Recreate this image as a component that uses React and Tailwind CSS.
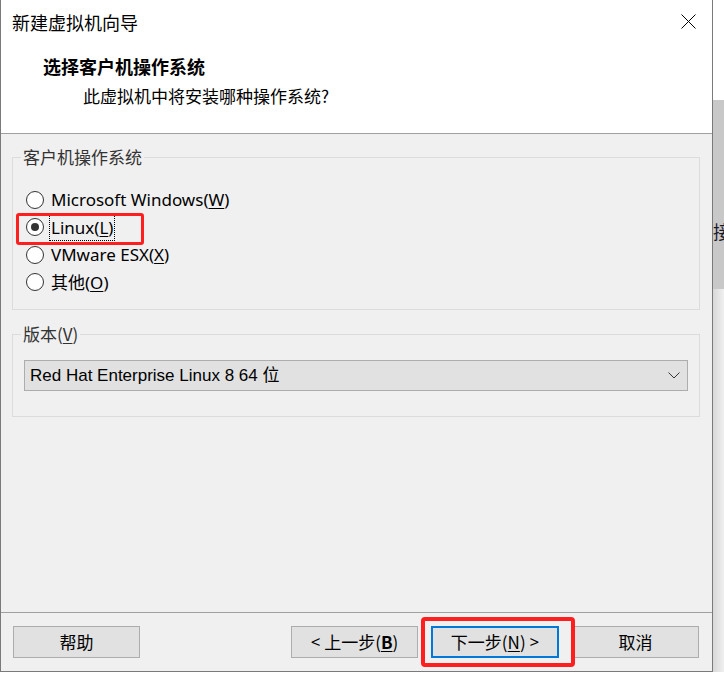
import React from 'react'

const cjk = '"Noto Sans CJK SC", sans-serif'
const latin = '"Noto Sans", "Noto Sans CJK SC", sans-serif'

function Radio({ label, mnemonic, rest = ')', checked, focused }) {
  const text = (
    <span className="leading-[20px]">
      {label}(<span className="underline underline-offset-2">{mnemonic}</span>{rest}
    </span>
  )
  return (
    <div className="flex items-center h-[27.5px] pl-[13px]">
      <span className="w-[18px] h-[18px] rounded-full border border-[#333] bg-white flex items-center justify-center shrink-0">
        {checked && <span className="w-[8px] h-[8px] rounded-full bg-[#333]" />}
      </span>
      <span
        className={
          'ml-[6px] text-[17px] text-black px-[1px] ' +
          (focused ? 'outline outline-1 outline-dotted outline-black' : '')
        }
        style={{ fontFamily: latin }}
      >
        {text}
      </span>
    </div>
  )
}

function Button({ children, primary }) {
  return (
    <div
      className={
        'h-[32px] flex items-center justify-center text-[17px] text-black bg-[#e1e1e1] ' +
        (primary ? 'w-[128px] border-2 border-[#0078d7]' : 'w-[127px] border border-[#adadad]')
      }
      style={{ fontFamily: cjk }}
    >
      {children}
    </div>
  )
}

export default function App() {
  return (
    <div className="flex w-[724px] h-[673px] bg-white overflow-hidden">
      {/* dialog */}
      <div className="relative w-[713px] h-[672px] shrink-0 flex flex-col bg-[#f0f0f0] border-l border-r border-b border-[#7a7a7a]">
        <div className="h-[134px] bg-white border-b border-[#a0a0a0] flex flex-col shrink-0">
          <div className="h-[44px] flex items-center justify-between pl-[11px] pr-[16px]">
            <span className="text-[18px] text-black" style={{ fontFamily: cjk }}>新建虚拟机向导</span>
            <svg width="15" height="15" viewBox="0 0 15 15" className="mt-[-1px]">
              <path d="M0.5 0.5 L14.5 14.5 M14.5 0.5 L0.5 14.5" stroke="#000" strokeWidth="1" fill="none" />
            </svg>
          </div>
          <div className="pl-[42px] pt-[10px] text-[18px] font-bold text-black leading-[24px]" style={{ fontFamily: cjk }}>
            选择客户机操作系统
          </div>
          <div className="pl-[82px] pt-[6px] text-[17px] text-black leading-[24px]" style={{ fontFamily: cjk }}>
            此虚拟机中将安装哪种操作系统?
          </div>
        </div>

        <div className="flex-1 flex flex-col pl-[11px] pr-[12px] pt-[11px]">
          <fieldset className="border border-[#dcdcdc] h-[165px]">
            <legend className="ml-[8px] px-[2px] text-[17px] text-[#333] leading-[24px]" style={{ fontFamily: cjk }}>
              客户机操作系统
            </legend>
            <div className="pt-[17px] flex flex-col">
              <Radio label="Microsoft Windows" mnemonic="W" />
              <Radio label="Linux" mnemonic="L" checked focused />
              <Radio label="VMware ESX" mnemonic="X" />
              <Radio label={<span style={{ fontFamily: cjk }}>其他</span>} mnemonic="O" />
            </div>
          </fieldset>

          <fieldset className="mt-[12px] border border-[#dcdcdc] h-[95px]">
            <legend className="ml-[8px] px-[2px] text-[17px] text-[#333] leading-[24px]" style={{ fontFamily: cjk }}>
              版本(<span className="underline underline-offset-2">V</span>)
            </legend>
            <div className="px-[11px] pt-[14px]">
              <div className="h-[31px] bg-[#e1e1e1] border border-[#adadad] flex items-center justify-between pl-[5px] pr-[7px]">
                <span className="text-[17px] text-black" style={{ fontFamily: '"Liberation Sans", "Noto Sans CJK SC", sans-serif' }}>
                  Red Hat Enterprise Linux 8 64 位
                </span>
                <svg width="12" height="7" viewBox="0 0 12 7">
                  <path d="M0.5 0.5 L6 6 L11.5 0.5" stroke="#333" strokeWidth="1" fill="none" />
                </svg>
              </div>
            </div>
          </fieldset>

          <div className="flex-1" />
        </div>

        <div className="h-[59px] border-t border-[#a0a0a0] flex items-start pt-[13px] pl-[12px] pr-[13px] shrink-0">
          <Button>帮助</Button>
          <div className="flex-1" />
          <div className="flex gap-[13px]">
            <Button>
              <span style={{ fontFamily: latin }}>&lt;</span>&nbsp;上一步(<span className="underline underline-offset-2 font-bold">B</span>)
            </Button>
            <Button primary>
              下一步(<span className="underline underline-offset-2">N</span>)&nbsp;<span style={{ fontFamily: latin }}>&gt;</span>
            </Button>
            <Button>取消</Button>
          </div>
        </div>

        {/* red annotation boxes */}
        <div className="absolute left-[15px] top-[213px] w-[128px] h-[32px] border-[3px] border-[#ff1f1f] rounded-[3px]" />
        <div className="absolute left-[420px] top-[617px] w-[154px] h-[50px] border-[4px] border-[#ff1f1f] rounded-[4px]" />
      </div>

      {/* background window strip */}
      <div className="flex-1 flex flex-col overflow-hidden">
        <div className="h-[100px] bg-white" />
        <div className="h-[189px] bg-[#c8c8c8] flex items-start pt-[119px]">
          <span className="text-[18px] text-[#1a1a2a] leading-[24px]" style={{ fontFamily: cjk }}>接</span>
        </div>
        <div className="h-[383px] bg-gradient-to-r from-[#d8d8d8] to-[#f0f0f0]" />
        <div className="flex-1 bg-white" />
      </div>
    </div>
  )
}
